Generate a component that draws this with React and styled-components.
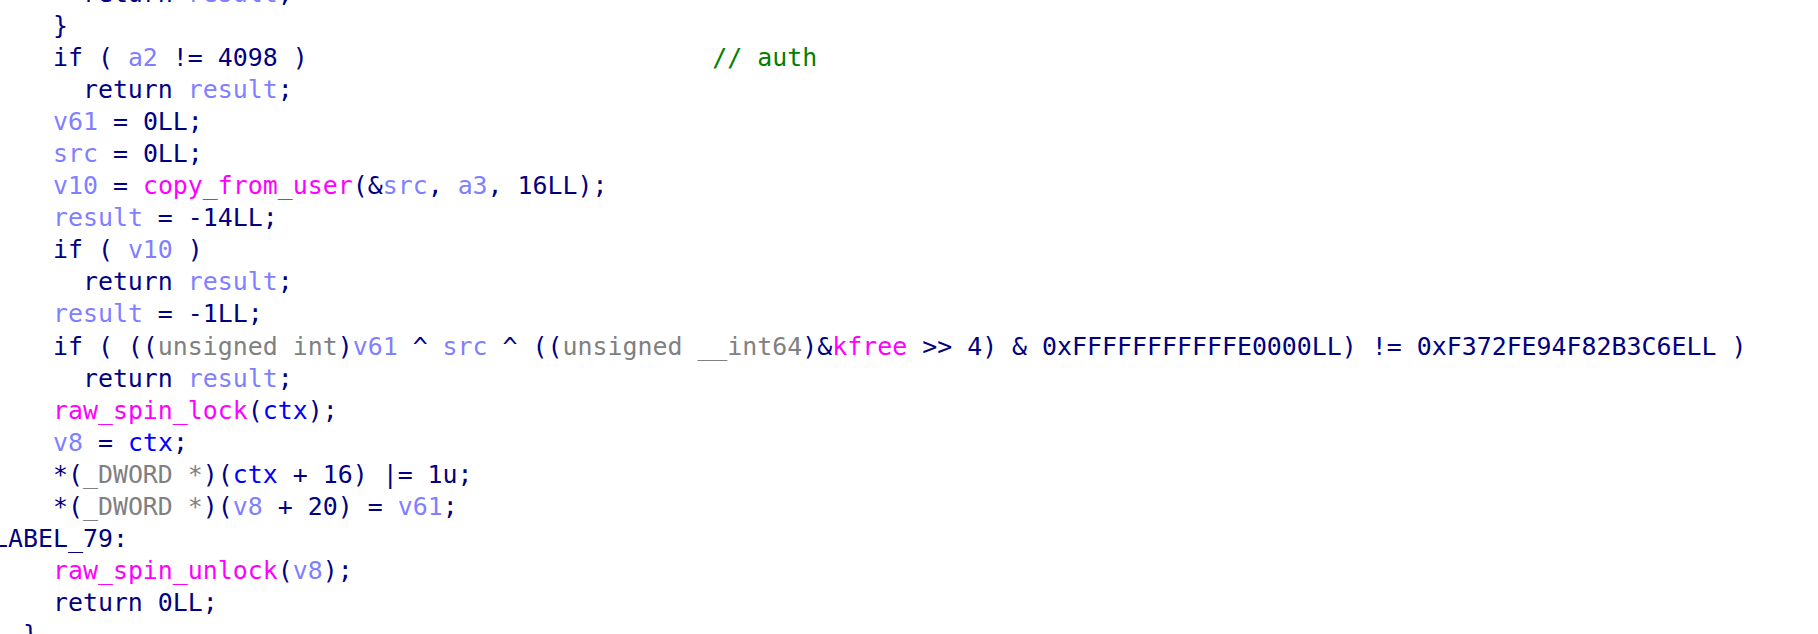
import React from 'react';
import styled, { createGlobalStyle } from 'styled-components';

const GlobalStyle = createGlobalStyle`
  html, body {
    margin: 0;
    padding: 0;
    background: #ffffff;
    overflow: hidden;
  }
`;

const colors = {
  n: '#000080',
  v: '#7f7fff',
  f: '#ff00ff',
  t: '#808080',
  g: '#0000ff',
  c: '#008000',
};

// IDA pseudocode, {kind|text} marks a coloured token
const source = [
  '      return {v|result};',
  '    }',
  '    if ( {v|a2} != 4098 )                           {c|// auth}',
  '      return {v|result};',
  '    {v|v61} = 0LL;',
  '    {v|src} = 0LL;',
  '    {v|v10} = {f|copy_from_user}(&{v|src}, {v|a3}, 16LL);',
  '    {v|result} = -14LL;',
  '    if ( {v|v10} )',
  '      return {v|result};',
  '    {v|result} = -1LL;',
  '    if ( (({t|unsigned int}){v|v61} ^ {v|src} ^ (({t|unsigned __int64})&{f|kfree} >> 4) & 0xFFFFFFFFFFFE0000LL) != 0xF372FE94F82B3C6ELL )',
  '      return {v|result};',
  '    {f|raw_spin_lock}({g|ctx});',
  '    {v|v8} = {g|ctx};',
  '    *({t|_DWORD *})({g|ctx} + 16) |= 1u;',
  '    *({t|_DWORD *})({v|v8} + 20) = {v|v61};',
  'LABEL_79:',
  '    {f|raw_spin_unlock}({v|v8});',
  '    return 0LL;',
  '  }',
];

const tokenize = (line) => {
  const parts = [];
  const re = /\{(\w)\|([^}]*)\}/g;
  let last = 0;
  let m;
  while ((m = re.exec(line))) {
    if (m.index > last) parts.push(['n', line.slice(last, m.index)]);
    parts.push([m[1], m[2]]);
    last = re.lastIndex;
  }
  if (last < line.length) parts.push(['n', line.slice(last)]);
  return parts;
};

const App = () => {
  return (
    <Page>
      <GlobalStyle />
      <Code>
        {source.map((line, i) => (
          <Line key={i}>
            {tokenize(line).map(([kind, text], j) => (
              <Token key={j} $kind={kind}>
                {text}
              </Token>
            ))}
          </Line>
        ))}
      </Code>
    </Page>
  );
};

const Page = styled.div`
  width: 1818px;
  height: 634px;
  background: #ffffff;
  overflow: hidden;
`;

const Code = styled.div`
  margin: -22.5px 0 0 -7px;
  font-family: 'DejaVu Sans Mono', 'Liberation Mono', monospace;
  font-size: 24.9px;
  line-height: 32.1px;
  color: #000080;
`;

const Line = styled.div`
  white-space: pre;
  height: 32.1px;
`;

const Token = styled.span`
  color: ${({ $kind }) => colors[$kind] || colors.n};
`;

export default App;
